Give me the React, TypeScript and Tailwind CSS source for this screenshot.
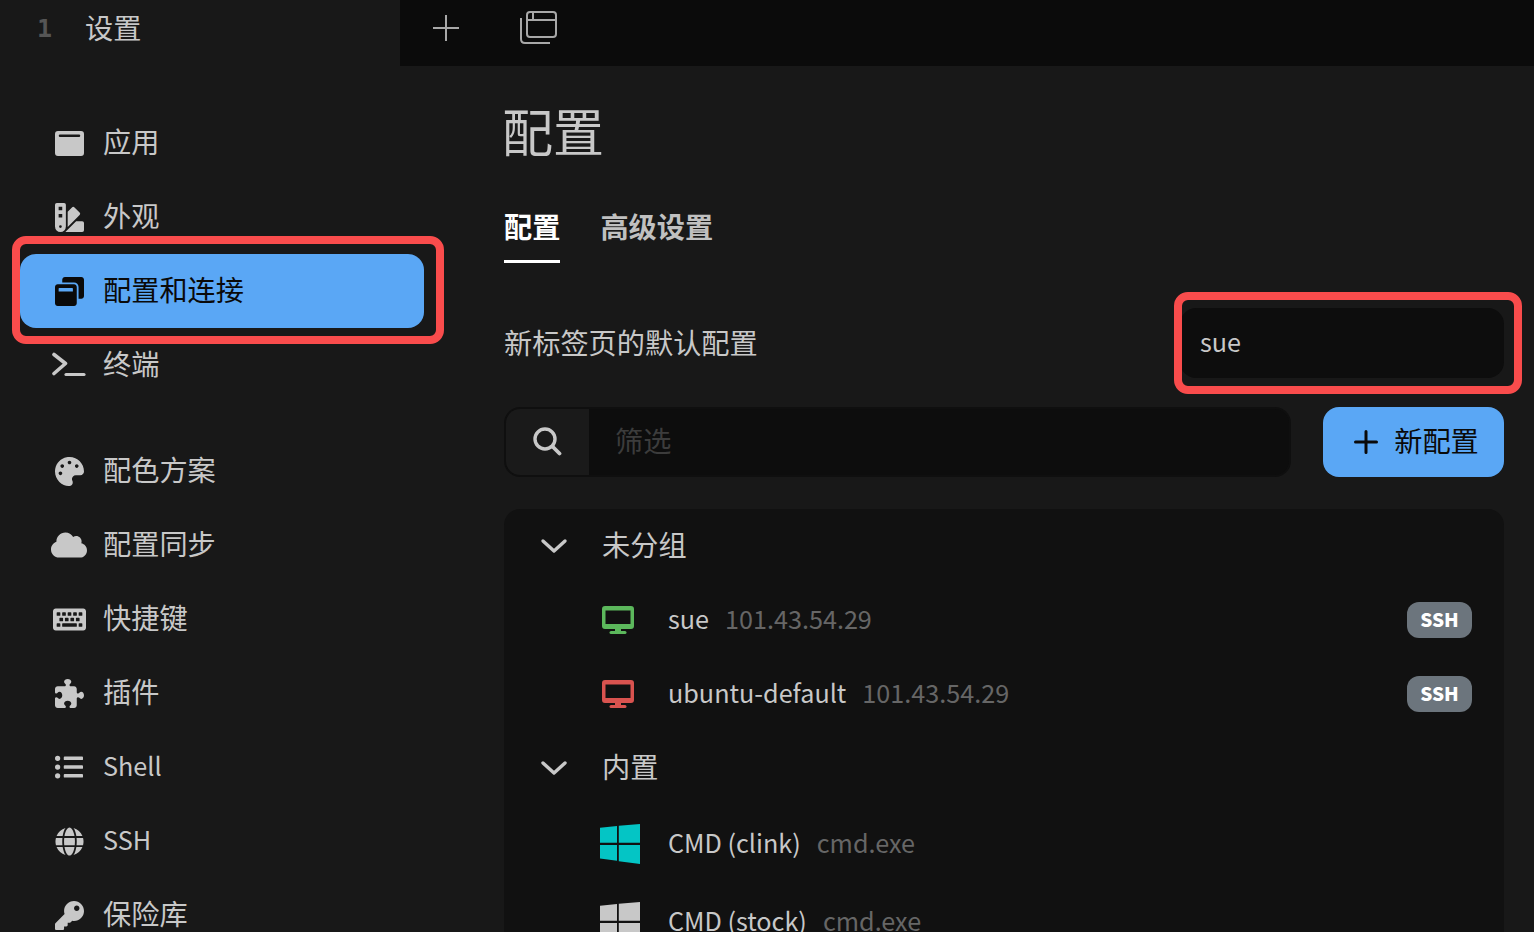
import React from 'react';
import {
  FaSwatchbook,
  FaWindowRestore,
  FaPalette,
  FaCloud,
  FaKeyboard,
  FaListUl,
  FaGlobe,
  FaKey,
} from 'react-icons/fa';
import { FaPuzzlePiece } from 'react-icons/fa6';

const WindowIcon = () => (
  <svg width="29" height="25" viewBox="0 0 29 25" fill="currentColor">
    <path
      fillRule="evenodd"
      d="M3 0 H26 A3 3 0 0 1 29 3 V22 A3 3 0 0 1 26 25 H3 A3 3 0 0 1 0 22 V3 A3 3 0 0 1 3 0 Z M5 3.5 A1 1 0 0 0 5 6 H24 A1 1 0 0 0 24 3.5 Z"
    />
  </svg>
);

const TerminalIcon = () => (
  <svg width="34" height="26" viewBox="0 0 34 26" fill="none" stroke="currentColor" strokeLinecap="round">
    <path d="M2 2.5 L13.5 11.5 L2 21.5" strokeWidth="3.6" strokeLinejoin="round" />
    <path d="M14 22.5 H32" strokeWidth="3.2" />
  </svg>
);

const DesktopIcon = ({ className }: { className: string }) => (
  <svg className={className} width="32" height="28" viewBox="0 0 32 28" fill="currentColor">
    <path
      fillRule="evenodd"
      d="M3 0 H29 A3 3 0 0 1 32 3 V20 A3 3 0 0 1 29 23 H3 A3 3 0 0 1 0 20 V3 A3 3 0 0 1 3 0 Z M3.5 4.5 V18 H28.5 V4.5 Z"
    />
    <rect x="13" y="23" width="6" height="3" />
    <rect x="7.5" y="25" width="17" height="3" rx="1.5" />
  </svg>
);

const WindowsLogo = ({ className }: { className: string }) => (
  <svg className={className} width="40" height="40" viewBox="0 0 40 40" fill="currentColor">
    <path d="M0 3.8 L17 2 V18.7 H0 Z" />
    <path d="M18.8 1.8 L40 0 V18.7 H18.8 Z" />
    <path d="M0 21 H17 V36.8 L0 34.6 Z" />
    <path d="M18.8 21 H40 V40 L18.8 37.2 Z" />
  </svg>
);

const NavItem = ({
  icon,
  label,
  active,
  latin,
}: {
  icon: React.ReactNode;
  label: string;
  active?: boolean;
  latin?: boolean;
}) => (
  <div className={`flex h-[74px] items-center rounded-[16px] ${active ? 'bg-[#5aa7f5] text-[#0a0a0a]' : 'text-[#c8c8c8]'}`}>
    <span className="flex w-[83px] shrink-0 justify-center pl-[15px]">{icon}</span>
    <span className={`leading-none ${latin ? 'pb-[2px] text-[25.2px]' : 'pb-[4px] text-[28.2px]'}`}>{label}</span>
  </div>
);

const GroupRow = ({ label }: { label: string }) => (
  <div className="flex h-[74px] items-center text-[#c8c8c8]">
    <svg className="ml-[36px] shrink-0" width="28" height="16" viewBox="0 0 28 16" fill="none" stroke="currentColor" strokeWidth="3.4" strokeLinecap="round" strokeLinejoin="round">
      <path d="M3 3 L14 13 L25 3" />
    </svg>
    <span className="ml-[34px] pb-[3px] text-[28.2px] leading-none">{label}</span>
  </div>
);

const ProfileRow = ({
  icon,
  name,
  desc,
  ssh,
  tall,
}: {
  icon: React.ReactNode;
  name: string;
  desc: string;
  ssh?: boolean;
  tall?: boolean;
}) => (
  <div className={`flex items-center ${tall ? 'h-[78px]' : 'h-[74px]'}`}>
    <span className="ml-[96px] flex w-[40px] shrink-0 justify-start">{icon}</span>
    <span className="ml-[28px] pb-[2px] text-[25.2px] leading-none text-[#c8c8c8]">{name}</span>
    <span className="ml-[16px] pb-[2px] text-[25.2px] leading-none text-[#666666]">{desc}</span>
    {ssh && (
      <span className="mr-[32px] ml-auto flex h-[36px] w-[65px] items-center justify-center rounded-[12px] bg-[#6c757d] pb-[2px] text-[19px] font-black text-white">
        SSH
      </span>
    )}
  </div>
);

export default function App() {
  return (
    <div
      className="relative h-[932px] w-[1534px] overflow-hidden bg-[#181818]"
      style={{ fontFamily: '"Noto Sans CJK SC", "Noto Sans", sans-serif' }}
    >
      {/* tab bar */}
      <div className="flex h-[66px]">
        <div className="flex w-[400px] items-center pb-[12px]">
          <span className="ml-[37px] w-[48px] pt-[3px] text-[25px] font-bold text-[#555555]" style={{ fontFamily: '"DejaVu Sans Mono", monospace' }}>
            1
          </span>
          <span className="text-[28.2px] leading-none text-[#c8c8c8]">设置</span>
        </div>
        <div className="flex flex-1 items-center bg-[#0b0b0b] pb-[10px] text-[#a8a8a8]">
          <svg className="ml-[32px]" width="28" height="28" viewBox="0 0 28 28" stroke="currentColor" strokeWidth="2" fill="none">
            <path d="M14 1 V27 M1 14 H27" />
          </svg>
          <svg className="ml-[60px]" width="38" height="34" viewBox="0 0 38 34" stroke="currentColor" strokeWidth="2" fill="none">
            <rect x="7" y="1" width="29" height="25" rx="3" />
            <path d="M7 9 H36 M13 1 V9" />
            <path d="M1 7 V28 Q1 32 5 32 H30" />
          </svg>
        </div>
      </div>

      <div className="flex">
        {/* sidebar */}
        <aside className="w-[444px] shrink-0 pt-[40px] pr-[20px] pl-[20px]">
          <div className="flex flex-col">
            <NavItem icon={<WindowIcon />} label="应用" />
            <NavItem icon={<FaSwatchbook size={29} />} label="外观" />
            <NavItem icon={<FaWindowRestore size={29} />} label="配置和连接" active />
            <NavItem icon={<TerminalIcon />} label="终端" />
          </div>
          <div className="mt-[32px] flex flex-col">
            <NavItem icon={<FaPalette size={29} />} label="配色方案" />
            <NavItem icon={<FaCloud size={36} />} label="配置同步" />
            <NavItem icon={<FaKeyboard size={33} />} label="快捷键" />
            <NavItem icon={<FaPuzzlePiece size={29} />} label="插件" />
            <NavItem icon={<FaListUl size={28} />} label="Shell" latin />
            <NavItem icon={<FaGlobe size={29} />} label="SSH" latin />
            <NavItem icon={<FaKey size={29} />} label="保险库" />
          </div>
        </aside>

        {/* content */}
        <main className="min-w-0 flex-1 pt-[30px] pr-[30px] pl-[60px]">
          <h1 className="-ml-[2px] h-[68px] text-[51px] leading-[68px] font-normal text-[#c8c8c8]">配置</h1>
          <div className="mt-[28px] flex h-[71px] gap-[40px]">
            <div className="flex h-[71px] flex-col items-center justify-center border-b-[3px] border-white text-[28.2px] leading-none font-bold text-white">
              配置
            </div>
            <div className="flex h-[71px] items-center pb-[3px] text-[28.2px] leading-none font-bold text-[#c0c0c0]">高级设置</div>
          </div>

          <div className="mt-[45px] flex h-[70px] items-center justify-between">
            <span className="pb-[2px] text-[28.2px] leading-none text-[#c8c8c8]">新标签页的默认配置</span>
            <div className="flex h-[70px] w-[324px] items-center rounded-[16px] bg-[#0d0d0d] pb-[2px] pl-[20px] text-[25.2px] leading-none text-[#c8c8c8]">
              sue
            </div>
          </div>

          <div className="mt-[29px] flex gap-[32px]">
            <div className="flex h-[70px] flex-1 overflow-hidden rounded-[16px] border-2 border-[#0f0f0f] bg-[#0d0d0d]">
              <div className="flex w-[83px] items-center justify-center bg-[#1a1a1a] pr-[2px] pb-[2px] text-[#c8c8c8]">
                <svg width="30" height="30" viewBox="0 0 30 30" fill="none" stroke="currentColor" strokeLinecap="round">
                  <circle cx="13" cy="13" r="10" strokeWidth="3.4" />
                  <path d="M20.5 20.5 L27.5 27.5" strokeWidth="3.8" />
                </svg>
              </div>
              <span className="flex items-center pb-[4px] pl-[26px] text-[28.2px] leading-none text-[#3c3c3c]">筛选</span>
            </div>
            <div className="flex h-[70px] w-[181px] items-center justify-center gap-[16px] rounded-[16px] bg-[#5aa7f5] pl-[6px] text-[#0a0a0a]">
              <svg width="24" height="24" viewBox="0 0 24 24" stroke="currentColor" strokeWidth="3" strokeLinecap="round" fill="none">
                <path d="M12 1.5 V22.5 M1.5 12 H22.5" />
              </svg>
              <span className="pb-[4px] text-[28.2px] leading-none">新配置</span>
            </div>
          </div>

          <div className="mt-[32px] rounded-[16px] bg-[#111111]">
            <GroupRow label="未分组" />
            <ProfileRow icon={<DesktopIcon className="ml-[2px] text-[#5cb85c]" />} name="sue" desc="101.43.54.29" ssh />
            <ProfileRow icon={<DesktopIcon className="ml-[2px] text-[#d9534f]" />} name="ubuntu-default" desc="101.43.54.29" ssh />
            <GroupRow label="内置" />
            <ProfileRow icon={<WindowsLogo className="text-[#04c5c5]" />} name="CMD (clink)" desc="cmd.exe" tall />
            <ProfileRow icon={<WindowsLogo className="text-[#c8c8c8]" />} name="CMD (stock)" desc="cmd.exe" tall />
          </div>
        </main>
      </div>

      {/* red annotation boxes drawn over the screenshot */}
      <div className="absolute top-[236px] left-[12px] h-[108px] w-[432px] rounded-[14px] border-[8px] border-[#f94c4c]" />
      <div className="absolute top-[292px] left-[1174px] h-[102px] w-[348px] rounded-[14px] border-[8px] border-[#f94c4c]" />
    </div>
  );
}
